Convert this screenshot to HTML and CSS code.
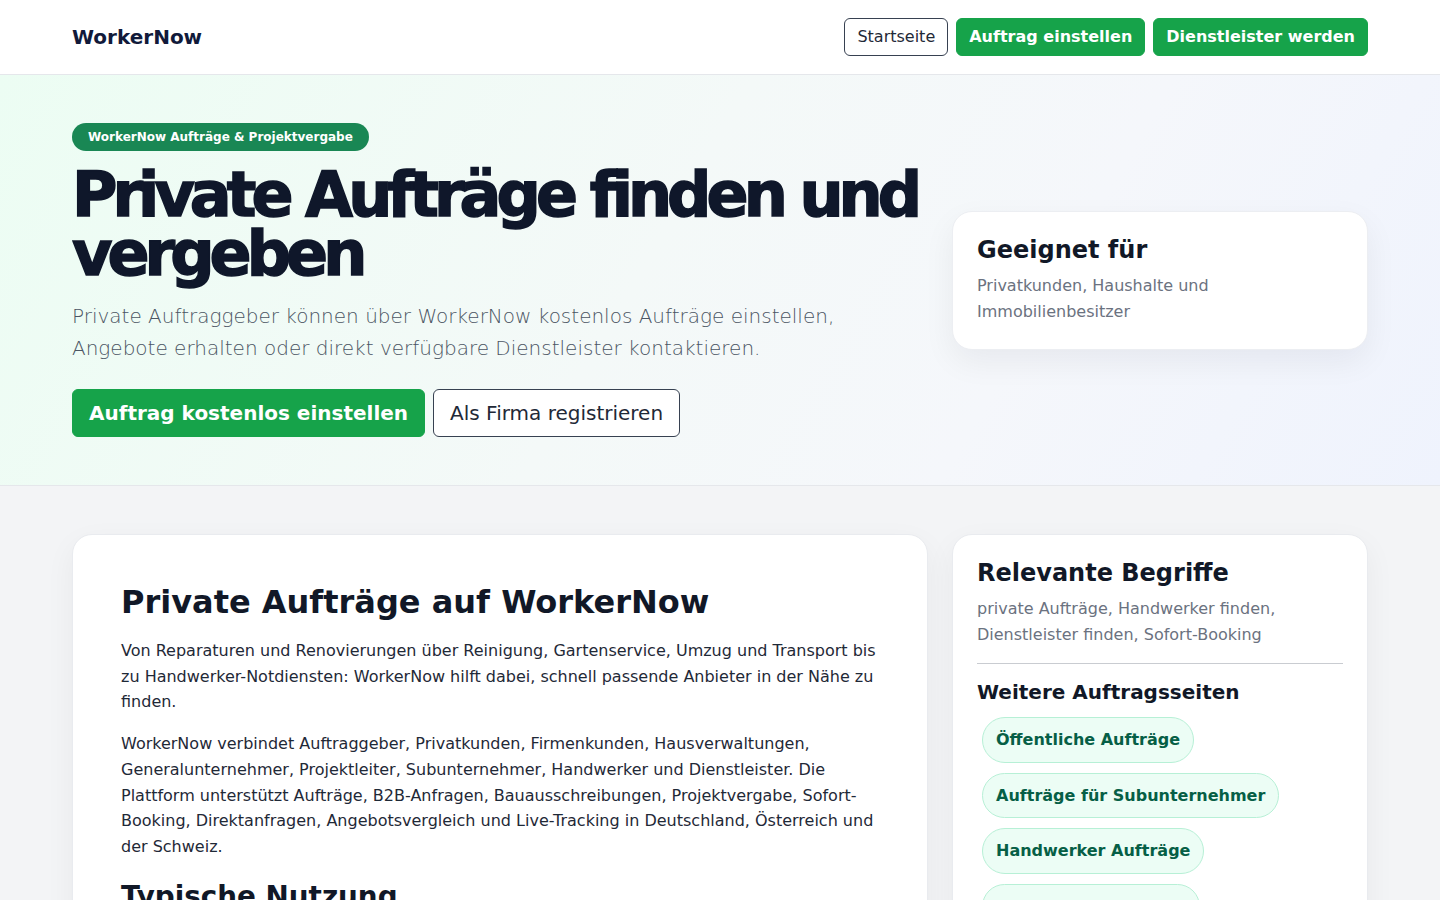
FILE: index.html
```html
<!DOCTYPE html>
<html lang="de">
<head>
<meta charset="utf-8">
<title>Private Aufträge finden und vergeben – WorkerNow</title>
<link rel="stylesheet" href="styles.css">
</head>
<body>
<header class="site-header">
  <div class="container header-inner">
    <a class="logo" href="#">WorkerNow</a>
    <nav class="nav">
      <a class="btn btn-outline btn-sm" href="#">Startseite</a>
      <a class="btn btn-green btn-sm" href="#">Auftrag einstellen</a>
      <a class="btn btn-green btn-sm" href="#">Dienstleister werden</a>
    </nav>
  </div>
</header>

<section class="hero">
  <div class="container hero-grid">
    <div class="hero-main">
      <span class="badge">WorkerNow Aufträge &amp; Projektvergabe</span>
      <h1 class="hero-title">Private Aufträge finden und vergeben</h1>
      <p class="hero-lead">Private Auftraggeber können über WorkerNow kostenlos Aufträge einstellen, Angebote erhalten oder direkt verfügbare Dienstleister kontaktieren.</p>
      <div class="hero-actions">
        <a class="btn btn-green btn-lg" href="#">Auftrag kostenlos einstellen</a>
        <a class="btn btn-outline btn-lg" href="#">Als Firma registrieren</a>
      </div>
    </div>
    <aside class="info-card">
      <h3 class="info-title">Geeignet für</h3>
      <p class="info-text">Privatkunden, Haushalte und Immobilienbesitzer</p>
    </aside>
  </div>
</section>

<main class="content">
  <div class="container content-grid">
    <article class="card main-card">
      <h2 class="card-title">Private Aufträge auf WorkerNow</h2>
      <p class="card-text">Von Reparaturen und Renovierungen über Reinigung, Gartenservice, Umzug und Transport bis zu Handwerker-Notdiensten: WorkerNow hilft dabei, schnell passende Anbieter in der Nähe zu finden.</p>
      <p class="card-text">WorkerNow verbindet Auftraggeber, Privatkunden, Firmenkunden, Hausverwaltungen, Generalunternehmer, Projektleiter, Subunternehmer, Handwerker und Dienstleister. Die Plattform unterstützt Aufträge, B2B-Anfragen, Bauausschreibungen, Projektvergabe, Sofort-Booking, Direktanfragen, Angebotsvergleich und Live-Tracking in Deutschland, Österreich und der Schweiz.</p>
      <h3 class="card-subtitle">Typische Nutzung</h3>
      <p class="card-text">Auftraggeber beschreiben ihr Vorhaben, erhalten Angebote und wählen den passenden Anbieter.</p>
    </article>
    <aside class="card side-card">
      <h3 class="side-title">Relevante Begriffe</h3>
      <p class="side-text">private Aufträge, Handwerker finden, Dienstleister finden, Sofort-Booking</p>
      <hr class="divider">
      <h4 class="side-subtitle">Weitere Auftragsseiten</h4>
      <div class="pill-list">
        <a class="pill" href="#">Öffentliche Aufträge</a>
        <a class="pill" href="#">Aufträge für Subunternehmer</a>
        <a class="pill" href="#">Handwerker Aufträge</a>
        <a class="pill" href="#">Aufträge in der Nähe</a>
      </div>
    </aside>
  </div>
</main>
</body>
</html>
```

FILE: styles.css
```css
* { box-sizing: border-box; }

body {
  margin: 0;
  font-family: "DejaVu Sans", "Noto Sans", sans-serif;
  background: #f3f4f6;
  color: #1f2937;
}

a { text-decoration: none; }

.container {
  max-width: 1296px;
  margin: 0 auto;
}

/* Header */
.site-header {
  background: #ffffff;
  border-bottom: 1px solid #e5e7eb;
}

.header-inner {
  display: flex;
  justify-content: space-between;
  align-items: center;
  padding: 18px 0;
}

.logo {
  font-size: 20px;
  font-weight: 700;
  color: #111a3a;
}

.nav {
  display: flex;
  gap: 8px;
}

.btn {
  display: inline-flex;
  align-items: center;
  justify-content: center;
  border-radius: 6px;
  border: 1px solid transparent;
  white-space: nowrap;
}

.btn-sm {
  height: 38px;
  padding: 0 12px 2px;
  font-size: 16px;
}

.btn-lg {
  height: 48px;
  padding: 0 16px;
  font-size: 20px;
}

.btn-green {
  background: #16a34a;
  border-color: #16a34a;
  color: #ffffff;
  font-weight: 700;
}

.btn-outline {
  background: #ffffff;
  border-color: #374151;
  color: #1f2937;
  font-weight: 400;
}

/* Hero */
.hero {
  background: linear-gradient(120deg, #ecfdf3 0%, #f4f9f8 45%, #f5f7fb 70%, #eff3fd 100%);
  border-bottom: 1px solid #e5e7eb;
  padding: 48px 0;
}

.hero-grid {
  display: grid;
  grid-template-columns: 1fr 416px;
  gap: 24px;
  align-items: center;
}

.badge {
  display: inline-block;
  background: #198754;
  color: #ffffff;
  font-size: 12px;
  font-weight: 700;
  line-height: 28px;
  padding: 0 16px;
  border-radius: 999px;
}

.hero-title {
  margin: 14px 0 17px;
  font-size: 62px;
  line-height: 59px;
  font-weight: 700;
  letter-spacing: -0.08em;
  color: #0f172a;
  -webkit-text-stroke: 1.5px #0f172a;
}

.hero-lead {
  margin: 0;
  max-width: 800px;
  font-size: 20px;
  line-height: 32px;
  font-weight: 300;
  color: #4b5563;
}

.hero-actions {
  display: flex;
  gap: 8px;
  margin-top: 25px;
}

.info-card {
  background: #ffffff;
  border: 1px solid #eceef2;
  border-radius: 20px;
  padding: 24px;
  box-shadow: 0 12px 32px rgba(15, 23, 42, 0.06);
}

.info-title {
  margin: 0 0 8px;
  font-size: 24px;
  line-height: 29px;
  color: #111827;
}

.info-text {
  margin: 0;
  font-size: 16px;
  line-height: 26px;
  color: #6b7280;
}

/* Content */
.content {
  padding: 48px 0;
}

.content-grid {
  display: grid;
  grid-template-columns: 1fr 416px;
  gap: 24px;
  align-items: start;
}

.card {
  background: #ffffff;
  border: 1px solid #e9ebef;
  border-radius: 20px;
  box-shadow: 0 10px 30px rgba(15, 23, 42, 0.05);
}

.main-card {
  padding: 48px;
}

.card-title {
  margin: 2px 0 18px;
  font-size: 32px;
  line-height: 35px;
  color: #111827;
}

.card-text {
  margin: 0 0 16px;
  font-size: 16px;
  line-height: 25.7px;
  color: #1f2937;
}

.card-subtitle {
  margin: 20px 0 12px;
  font-size: 27.8px;
  line-height: 33px;
  color: #111827;
}

.side-card {
  padding: 24px;
}

.side-title {
  margin: 0 0 8px;
  font-size: 24px;
  line-height: 29px;
  color: #111827;
}

.side-text {
  margin: 0;
  font-size: 16px;
  line-height: 26px;
  color: #6b7280;
}

.divider {
  border: 0;
  border-top: 1px solid #c9ccd1;
  margin: 15px 0 16px;
}

.side-subtitle {
  margin: 0 0 8px;
  font-size: 20px;
  line-height: 24px;
  color: #111827;
}

.pill-list {
  display: flex;
  flex-direction: column;
  align-items: flex-start;
}

.pill {
  display: inline-block;
  margin: 5px;
  padding: 11px 13px;
  line-height: 21.5px;
  font-size: 16px;
  font-weight: 700;
  color: #065f46;
  background: #ecfdf5;
  border: 1px solid #b7f0d6;
  border-radius: 999px;
}
```
